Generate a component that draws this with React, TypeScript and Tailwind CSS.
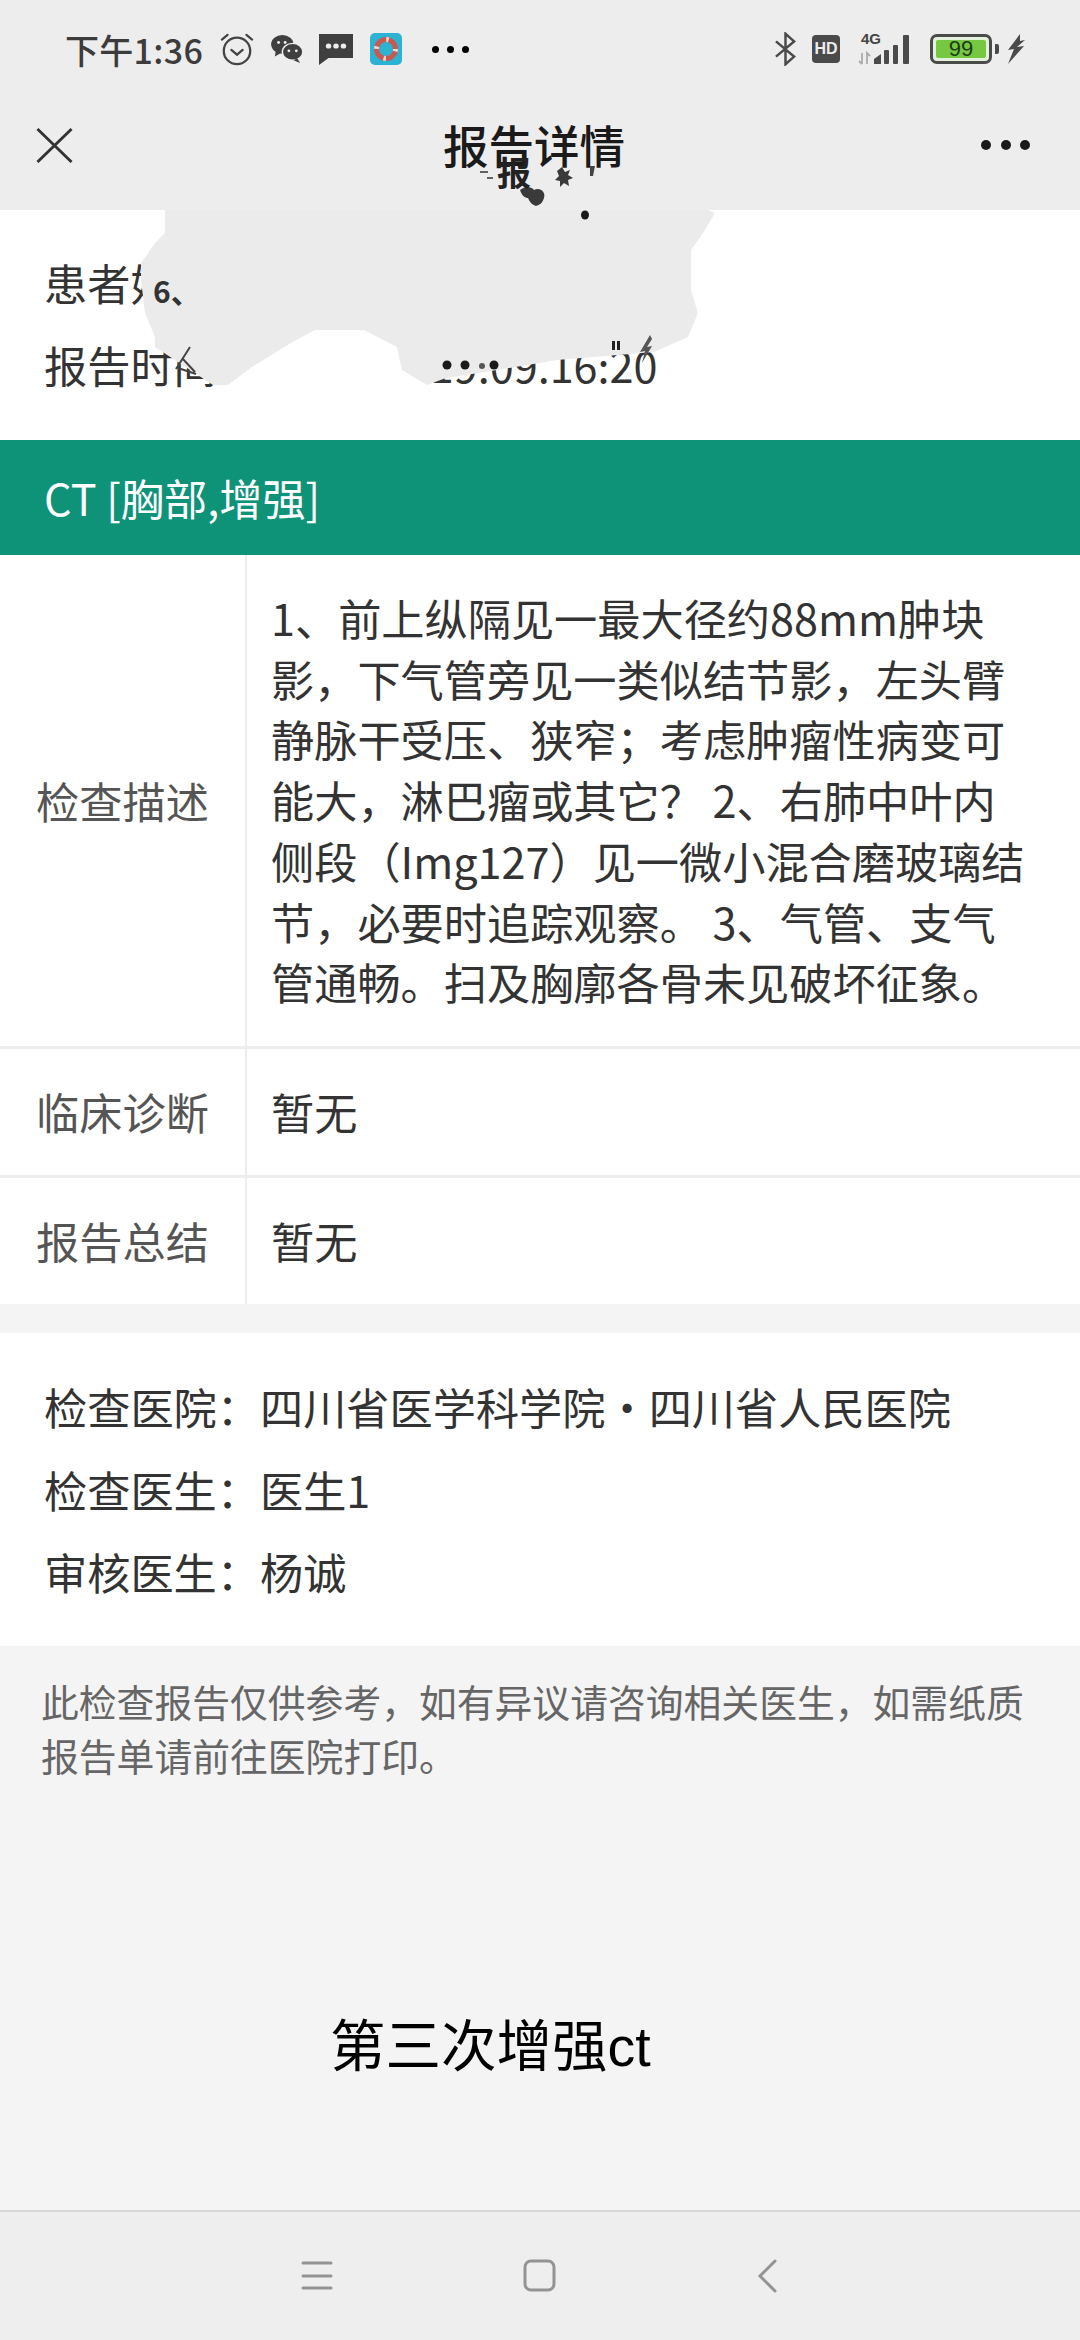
const font = { fontFamily: '"Noto Sans CJK SC", "Noto Sans", sans-serif' };
const latin = { fontFamily: '"Liberation Sans", sans-serif' };

function Blob() {
  return (
    <svg className="absolute left-0 top-[150px]" width="1080" height="250" viewBox="0 150 1080 250">
      <path
        d="M165 210 L708 210 L715 213 L703 233 L691 250 L691 290 L698 313 L688 337 L654 352 L557 360 L485 372 L446 378 L427 385 L402 370 L397 347 L364 330 L315 330 L291 343 L252 367 L228 385 L213 385 L155 347 L155 337 L145 313 L141 280 L141 263 L155 243 L165 233 Z"
        fill="#ebebeb"
      />
      <ellipse cx="585" cy="215" rx="4" ry="4.5" fill="#1a1a1a" />
      <circle cx="447" cy="365" r="4.5" fill="#1a1a1a" />
      <circle cx="465" cy="365" r="4.5" fill="#1a1a1a" />
      <circle cx="482" cy="366" r="3" fill="#555" />
      <circle cx="494" cy="365" r="4.5" fill="#1a1a1a" />
      <path d="M612 341h3v9h-3zM617 341h3v9h-3z" fill="#222" />
      <path d="M650 335L640 352l5-1-3 12 10-17-5 1 5-8z" fill="#555" />
      <path d="M190 347L176 369M178 368L196 374M182 358L195 372" stroke="#444" strokeWidth="2" fill="none" />
      <path d="M520 190c6-5 12-3 14 0 6-3 12 2 10 8-2 6-5 7-8 8-5-2-6-4-8-8-3 0-6-2-8-8z" fill="#3a3a3a" />
      <path d="M562 167l3 5 5-2-2 5 5 3-5 2 1 6-5-3-4 4 0-6-5-1 4-4-2-5z" fill="#3a3a3a" />
      <path d="M590 166h5l-2 10h-3z" fill="#444" />
      <path d="M480 172h8M487 178h6" stroke="#333" strokeWidth="1.5" />
    </svg>
  );
}

export default function App() {
  return (
    <div className="relative w-[1080px] h-[2340px] overflow-hidden bg-[#f4f4f4] text-[#333]" style={font}>
      <div className="bg-[#ededed] h-[210px] flex flex-col">
        <div className="h-[98px] flex items-center pl-[65px] pr-[55px] justify-between">
          <div className="flex items-center">
            <span className="text-[34px] font-medium text-[#3c3c3c] tracking-[0.3px]">下午1:36</span>
            <svg className="ml-[17px]" width="34" height="34" viewBox="0 0 36 36" fill="none" stroke="#444" strokeWidth="2.4" strokeLinecap="round">
              <circle cx="18" cy="20" r="14" />
              <path d="M12 19l6 5 6-5" />
              <path d="M2 8l6-5M34 8l-6-5" />
            </svg>
            <svg className="ml-[16px]" width="34" height="28" viewBox="0 0 34 30" fill="#3f3f3f">
              <ellipse cx="12" cy="10" rx="12" ry="10" />
              <path d="M5 17l-1 6 7-4z" />
              <ellipse cx="23" cy="18" rx="11" ry="9" stroke="#ededed" strokeWidth="1.5" />
              <path d="M28 25l3 5-7-3z" />
              <circle cx="8" cy="8" r="1.6" fill="#ededed" />
              <circle cx="15" cy="8" r="1.6" fill="#ededed" />
              <circle cx="19" cy="17" r="1.5" fill="#ededed" />
              <circle cx="27" cy="17" r="1.5" fill="#ededed" />
            </svg>
            <svg className="ml-[15px]" width="34" height="32" viewBox="0 0 32 32" preserveAspectRatio="none">
              <path d="M0 1h32v24H9L0 32z" fill="#3f3f3f" />
              <circle cx="9" cy="13" r="2.6" fill="#ededed" />
              <circle cx="16" cy="13" r="2.6" fill="#ededed" />
              <circle cx="23" cy="13" r="2.6" fill="#ededed" />
            </svg>
            <svg className="ml-[17px]" width="32" height="32" viewBox="0 0 32 32" fill="none">
              <rect width="32" height="32" rx="5" fill="#2cb2d2" />
              <circle cx="16" cy="16" r="9.5" stroke="#c9584f" strokeWidth="5" />
              <circle cx="16" cy="16" r="9.5" stroke="#f3d7d0" strokeWidth="5" strokeDasharray="2.5 12.4" />
            </svg>
            <div className="ml-[30px] flex gap-[8px]">
              <span className="w-[7px] h-[7px] rounded-full bg-black" />
              <span className="w-[7px] h-[7px] rounded-full bg-black" />
              <span className="w-[7px] h-[7px] rounded-full bg-black" />
            </div>
          </div>
          <div className="flex items-center">
            <svg width="21" height="34" viewBox="0 0 22 34" fill="none" stroke="#4a4a4a" strokeWidth="2.6">
              <path d="M1 9l19 16-9 8V1l9 8L1 25" />
            </svg>
            <div className="ml-[16px] w-[28px] h-[28px] rounded-[4px] bg-[#4a4a4a] flex items-center justify-center text-[#ededed] text-[16px] font-bold leading-none" style={latin}>HD</div>
            <div className="ml-[17px] relative w-[58px] h-[32px]">
              <span className="absolute left-[4px] top-[-1px] text-[15px] leading-[14px] font-semibold text-[#444]" style={latin}>4G</span>
              <svg className="absolute left-0 top-0" width="58" height="32" viewBox="0 0 58 32">
                <path d="M5 20v11M2 28l3 3M10 31V20l3 3" stroke="#aaa" strokeWidth="1.8" fill="none" />
                <path d="M17 31v-5l7-5v10z" fill="#4a4a4a" />
                <rect x="27" y="17" width="5" height="14" rx="1" fill="#4a4a4a" />
                <rect x="36" y="12" width="5" height="19" rx="1" fill="#4a4a4a" />
                <rect x="46" y="2" width="6" height="29" rx="1" fill="#4a4a4a" />
              </svg>
            </div>
            <div className="ml-[15px] w-[62px] h-[30px] rounded-[7px] border-[3px] border-[#4a4a4a] bg-[#e4f1dc] p-[3px] flex">
              <div className="flex-1 rounded-[2px] bg-[#76c843] flex items-center justify-center text-[#1c3d10] text-[22px] leading-none" style={latin}>99</div>
            </div>
            <div className="ml-[3px] w-[4px] h-[10px] rounded-r-[2px] bg-[#4a4a4a]" />
            <svg className="ml-[8px]" width="18" height="30" viewBox="0 0 18 30" fill="#4a4a4a">
              <path d="M13 0L1 16l6-1-6 15L17 12l-7 1 8-7-5 1z" />
            </svg>
          </div>
        </div>
        <div className="relative h-[112px] flex items-start justify-between">
          <svg className="ml-[36px] mt-[29px]" width="37" height="36" viewBox="0 0 38 38" stroke="#333" strokeWidth="3" fill="none">
            <path d="M1 2l36 35M37 2L1 37" />
          </svg>
          <div className="absolute left-[443px] top-[16px] text-[45.5px] leading-[60px] text-[#1a1a1a] font-medium">报告详情</div>
          <div className="mr-[50px] mt-[42px] flex gap-[9.5px]">
            <span className="w-[10px] h-[10px] rounded-full bg-[#1a1a1a]" />
            <span className="w-[10px] h-[10px] rounded-full bg-[#1a1a1a]" />
            <span className="w-[10px] h-[10px] rounded-full bg-[#1a1a1a]" />
          </div>
        </div>
      </div>

      <div className="bg-white h-[230px] pl-[44px] pt-[31px] text-[43.2px] leading-[82px] text-[#333]">
        <div>患者姓名：</div>
        <div className="flex">
          <span>报告时间</span>
          <span className="ml-[213px]">19.09.16:20</span>
        </div>
      </div>

      <div className="bg-[#0e9278] h-[115px] flex items-center pl-[44px] text-[43.2px] text-white">CT [胸部,增强]</div>

      <div className="bg-white text-[43.2px] leading-[60.7px]">
        <div className="flex h-[494px] border-b-[3px] border-[#eeeeee]">
          <div className="w-[247px] shrink-0 flex items-center justify-center text-[#555] border-r-2 border-[#eeeeee]">检查描述</div>
          <div className="pl-[24px] pr-[46px] pt-[32px] text-[#333]">1、前上纵隔见一最大径约88mm肿块<br />影，下气管旁见一类似结节影，左头臂静脉干受压、狭窄；考虑肿瘤性病变可能大，淋巴瘤或其它？ 2、右肺中叶内侧段（Img127）见一微小混合磨玻璃结节，必要时追踪观察。 3、气管、支气管通畅。扫及胸廓各骨未见破坏征象。</div>
        </div>
        <div className="flex h-[129px] border-b-[3px] border-[#eeeeee]">
          <div className="w-[247px] shrink-0 flex items-center justify-center text-[#555] border-r-2 border-[#eeeeee] pb-[2px]">临床诊断</div>
          <div className="pl-[24px] pb-[2px] flex items-center">暂无</div>
        </div>
        <div className="flex h-[126px]">
          <div className="w-[247px] shrink-0 flex items-center justify-center text-[#555] border-r-2 border-[#eeeeee] pb-[2px]">报告总结</div>
          <div className="pl-[24px] pb-[2px] flex items-center">暂无</div>
        </div>
      </div>

      <div className="mt-[29px] bg-white h-[313px] pl-[44px] pt-[32px] text-[43.2px] leading-[82.5px]">
        <div>检查医院：四川省医学科学院・四川省人民医院</div>
        <div>检查医生：医生1</div>
        <div>审核医生：杨诚</div>
      </div>

      <div className="px-[41px] pt-[28px] text-[37.8px] leading-[54px] text-[#666]">此检查报告仅供参考，如有异议请咨询相关医生，如需纸质报告单请前往医院打印。</div>

      <div className="absolute left-[330px] top-[2010px] text-[55.5px] leading-[74px] text-black" style={{ fontFamily: '"Liberation Sans", "Noto Sans CJK SC", sans-serif' }}>第三次增强ct</div>

      <div className="absolute left-0 right-0 top-[2210px] h-[130px] bg-[#eeeeee] border-t-2 border-[#d8d8d8] flex items-start pl-[300px] pt-[46px]">
        <svg width="34" height="36" viewBox="0 0 34 36" fill="none" stroke="#939393" strokeWidth="3" strokeLinecap="round">
          <path d="M3 5h28M3 18h28M3 30h28" />
        </svg>
        <svg className="ml-[188px]" width="36" height="36" viewBox="0 0 36 36" fill="none" stroke="#939393" strokeWidth="3">
          <rect x="3" y="3" width="29" height="29" rx="6" />
        </svg>
        <svg className="ml-[198px]" width="24" height="36" viewBox="0 0 24 36" fill="none" stroke="#939393" strokeWidth="3" strokeLinecap="round">
          <path d="M19 3L4 18l15 15" />
        </svg>
      </div>

      <Blob />

      <span className="absolute left-[497px] top-[152px] text-[34px] leading-[40px] font-bold text-[#222]">报</span>
      <span className="absolute left-[153px] top-[270px] text-[30px] leading-[40px] font-bold text-[#333]">6、</span>
    </div>
  );
}
